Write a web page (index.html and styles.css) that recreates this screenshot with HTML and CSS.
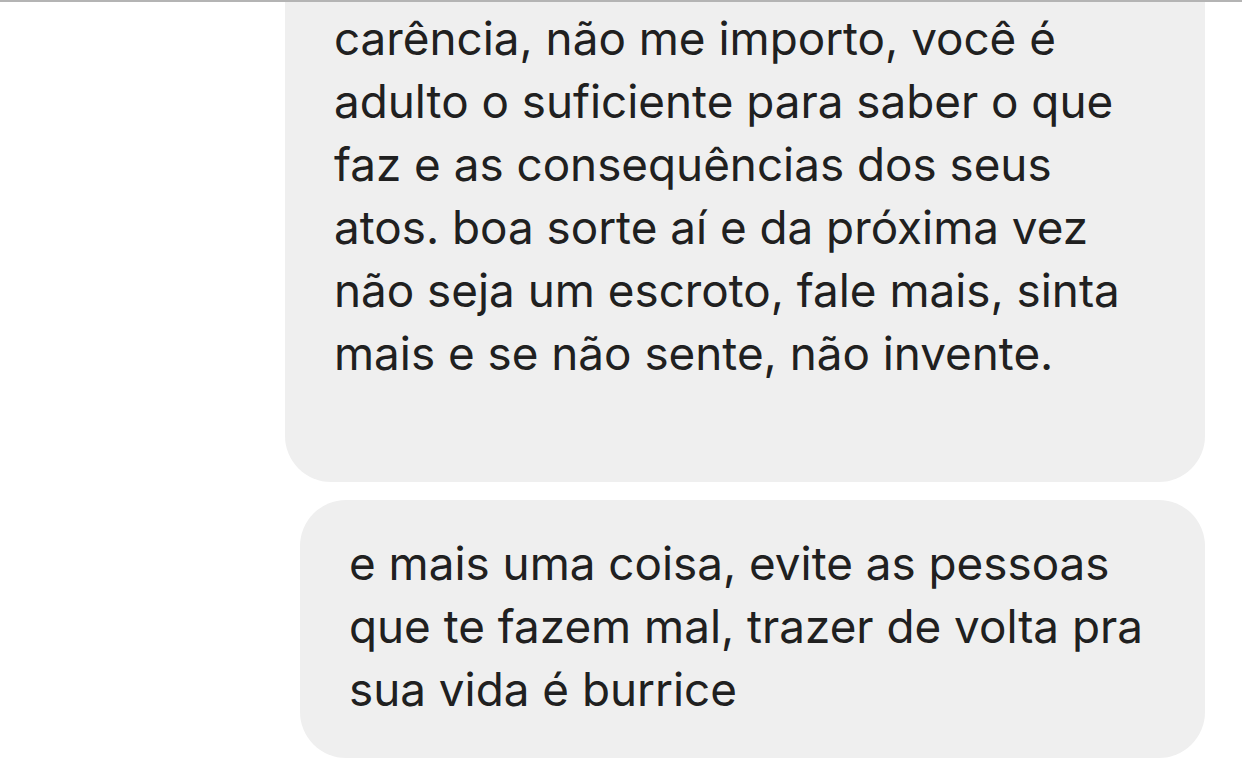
FILE: index.html
```html
<!DOCTYPE html>
<html lang="pt-BR">
<head>
  <meta charset="UTF-8" />
  <meta name="viewport" content="width=device-width, initial-scale=1.0"/>
  <title>Mensagens</title>
  <link rel="stylesheet" href="styles.css">
</head>
<body>
  <div class="thread">
    <div class="bubble bubble-first">
      <p class="text">carência, não me importo, você é<br>
      adulto o suficiente para saber o que<br>
      faz e as consequências dos seus<br>
      atos. boa sorte aí e da próxima vez<br>
      não seja um escroto, fale mais, sinta<br>
      mais e se não sente, não invente.</p>
    </div>
    <div class="bubble bubble-last">
      <p class="text">e mais uma coisa, evite as pessoas<br>
      que te fazem mal, trazer de volta pra<br>
      sua vida é burrice</p>
    </div>
  </div>
</body>
</html>
```

FILE: styles.css
```css
:root {
  --bg-color: #ffffff;
  --bubble-bg: #efefef;
  --text-color: #202020;
  --rule-color: #b4b4b4;
  --font-family: Inter, "Noto Sans", "Liberation Sans", sans-serif;
}

* {
  box-sizing: border-box;
}

html, body {
  margin: 0;
  padding: 0;
  background-color: var(--bg-color);
  color: var(--text-color);
  font-family: var(--font-family);
}

.thread {
  display: flex;
  flex-direction: column;
  align-items: flex-end;
  gap: 18px;
  border-top: 2px solid var(--rule-color);
  padding-right: 37px;
  height: 780px;
  overflow: hidden;
}

.bubble {
  background-color: var(--bubble-bg);
  border-radius: 46px;
  padding-left: 49px;
}

.bubble-first {
  width: 920px;
  border-top-left-radius: 0;
  border-top-right-radius: 0;
  padding-top: 5px;
  padding-bottom: 97px;
}

.bubble-last {
  width: 905px;
  padding-top: 32px;
  padding-bottom: 37px;
}

.text {
  margin: 0;
  font-size: 45.8px;
  line-height: 63px;
  font-weight: 400;
}
```
